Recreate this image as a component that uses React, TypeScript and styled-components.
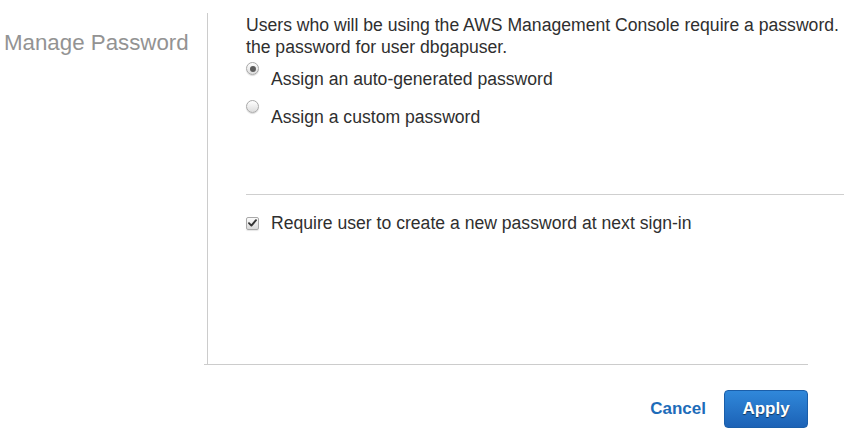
import React from "react";
import styled, { createGlobalStyle } from "styled-components";

const GlobalStyle = createGlobalStyle`
  html, body { margin: 0; padding: 0; background: #ffffff; }
  body { font-family: "Liberation Sans", Helvetica, Arial, sans-serif; color: #333333; }
`;

const Page = styled.div`
  width: 844px;
  height: 441px;
  padding-top: 13px;
  box-sizing: border-box;
  overflow: hidden;
`;

const Section = styled.div`
  display: flex;
  height: 351px;
`;

const SectionLabel = styled.div`
  width: 207px;
  flex: none;
  box-sizing: border-box;
  padding: 17px 0 0 4px;
  font-size: 22.3px;
  line-height: 26px;
  color: #939393;
  white-space: nowrap;
`;

const Panel = styled.div`
  flex: 1;
  border-left: 1px solid #cccccc;
  padding: 1px 0 0 38px;
  display: flex;
  flex-direction: column;
`;

const Intro = styled.p`
  margin: 0;
  font-size: 17.6px;
  line-height: 22px;
  white-space: nowrap;
  color: #2f2f2f;
`;

const OptionList = styled.div`
  display: flex;
  flex-direction: column;
  gap: 10px;
  margin-top: 4px;
`;

const OptionRow = styled.label`
  display: flex;
  align-items: flex-start;
  gap: 12px;
`;

const Radio = styled.input.attrs({ type: "radio" })`
  appearance: none;
  -webkit-appearance: none;
  margin: 0;
  width: 13px;
  height: 13px;
  flex: none;
  border-radius: 50%;
  border: 1px solid #a9a9a9;
  box-sizing: border-box;
  background: linear-gradient(#ffffff, #dcdcdc);
  box-shadow: 0 1px 1px rgba(0, 0, 0, 0.15);
  display: grid;
  place-items: center;

  &:checked::after {
    content: "";
    width: 6px;
    height: 6px;
    border-radius: 50%;
    background: #5c5c5c;
  }
`;

const OptionText = styled.span<{ $offset?: number }>`
  margin-top: ${(p) => (p.$offset ?? 0)}px;
  font-size: 17.6px;
  line-height: 22px;
  color: #2f2f2f;
`;

const Separator = styled.hr`
  margin: 66px 0 0 0;
  border: 0;
  border-top: 1px solid #cfcfcf;
  height: 0;
`;

const CheckRow = styled.label`
  display: flex;
  align-items: center;
  gap: 12px;
  margin-top: 17px;
`;

const CheckBox = styled.span`
  width: 13px;
  height: 13px;
  flex: none;
  box-sizing: border-box;
  border: 1px solid #a9a9a9;
  border-radius: 2px;
  background: linear-gradient(#fbfbfb, #d9d9d9);
  box-shadow: 0 1px 1px rgba(0, 0, 0, 0.1);
  display: grid;
  place-items: center;
`;

const Footer = styled.div`
  width: 808px;
`;

const FooterRule = styled.div`
  margin-left: 204px;
  border-top: 1px solid #cccccc;
`;

const Actions = styled.div`
  display: flex;
  justify-content: flex-end;
  align-items: center;
  gap: 18px;
  padding-top: 25px;
`;

const CancelLink = styled.a`
  font-size: 17px;
  font-weight: bold;
  color: #1d6cb9;
  text-decoration: none;
  cursor: pointer;
`;

const ApplyButton = styled.button`
  width: 84px;
  height: 38px;
  border-radius: 4px;
  border: 1px solid #1a5ea9;
  background: linear-gradient(#3088da, #1c62b6);
  color: #ffffff;
  font-family: "Liberation Sans", Helvetica, Arial, sans-serif;
  font-size: 17px;
  font-weight: bold;
  text-shadow: 0 1px 1px rgba(0, 0, 0, 0.55);
  padding: 0;
  cursor: pointer;
`;

export default function App() {
  return (
    <>
      <GlobalStyle />
      <Page>
        <Section>
          <SectionLabel>Manage Password</SectionLabel>
          <Panel>
            <Intro>
              Users who will be using the AWS Management Console require a password.
              <br />
              the password for user dbgapuser.
            </Intro>
            <OptionList>
              <OptionRow>
                <Radio name="pw" defaultChecked />
                <OptionText $offset={6}>Assign an auto-generated password</OptionText>
              </OptionRow>
              <OptionRow>
                <Radio name="pw" />
                <OptionText $offset={6}>Assign a custom password</OptionText>
              </OptionRow>
            </OptionList>
            <Separator />
            <CheckRow>
              <CheckBox>
                <svg width="9" height="8" viewBox="0 0 9 8">
                  <path d="M1 4.2 L3.4 6.6 L8 1.2" fill="none" stroke="#333" strokeWidth="1.9" strokeLinecap="round" strokeLinejoin="round" />
                </svg>
              </CheckBox>
              <OptionText>Require user to create a new password at next sign-in</OptionText>
            </CheckRow>
          </Panel>
        </Section>
        <Footer>
          <FooterRule />
          <Actions>
            <CancelLink>Cancel</CancelLink>
            <ApplyButton>Apply</ApplyButton>
          </Actions>
        </Footer>
      </Page>
    </>
  );
}
